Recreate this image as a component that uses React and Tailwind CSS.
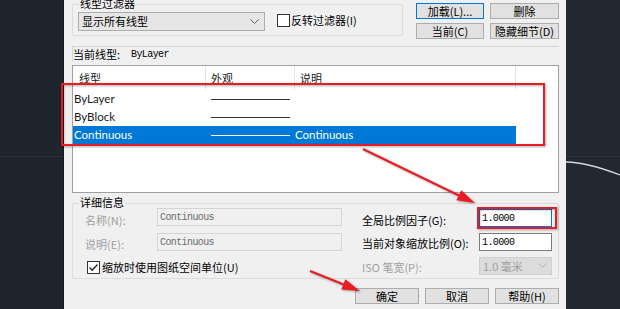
import React from 'react';

const MONO = "font-['Liberation_Mono',monospace] text-[10px] tracking-[-0.6px]";

function Chevron({ color = '#606060' }) {
  return (
    <svg width="9" height="6" viewBox="0 0 9 6">
      <polyline points="0.5,0.5 4.5,4.5 8.5,0.5" fill="none" stroke={color} strokeWidth="1" />
    </svg>
  );
}

function Btn({ children, focused, className = '' }) {
  return (
    <div className={`flex h-[16px] items-center justify-center border ${focused ? 'border-[#0078d7]' : 'border-[#adadad]'} bg-[#e1e1e1] leading-[13px] ${className}`}>
      {children}
    </div>
  );
}

function Row({ name, desc, selected }) {
  return (
    <div className="flex h-[18px] items-center font-['Lato',sans-serif] text-[11.5px]">
      <div className={`flex h-full w-[443px] items-center ${selected ? 'bg-[#0078d7] text-white' : 'text-[#1a1a1a]'}`}>
        <div className="w-[133px] pl-[1px]">{name}</div>
        <div className="w-[89px] pl-[5px]">
          <div className={`h-px w-[79px] ${selected ? 'bg-white' : 'bg-[#333]'}`} />
        </div>
        <div className="w-[221px]">{desc}</div>
      </div>
    </div>
  );
}

function Field({ value, disabled, focused, className = '' }) {
  return (
    <div
      className={`flex h-[18px] items-center border pl-[2px] ${MONO} ${
        disabled ? 'border-[#d4d4d4] bg-[#f0f0f0] text-[#6d6d6d]' : focused ? 'border-[#0078d7] bg-white text-black' : 'border-[#7a7a7a] bg-white text-black'
      } ${className}`}
    >
      {value}
    </div>
  );
}

export default function App() {
  return (
    <div className="relative flex h-[309px] w-[620px] overflow-hidden bg-[#20262e] font-['Noto_Sans_CJK_SC',sans-serif] text-[11px] text-black">
      {/* canvas left */}
      <div className="relative w-[64px] shrink-0 border-r border-[#15191e] bg-[#1f252d]">
        <svg className="absolute inset-0" width="63" height="309">
          <line x1="0" y1="156.5" x2="63" y2="156.5" stroke="#2a3139" strokeWidth="1" />
        </svg>
      </div>

      {/* dialog */}
      <div className="flex w-[502px] shrink-0 flex-col bg-[#f0f0f0] pl-[8px] pr-[7px]">
        <div className="flex h-[46px] items-start">
          <div className="relative mt-[4px] flex h-[32px] w-[331px] items-start rounded-[2px] border border-[#dcdcdc] pl-[5px] pt-[7px]">
            <span className="absolute -top-[8px] left-[6px] bg-[#f0f0f0] px-[1px] leading-[13px]">线型过滤器</span>
            <div className="flex h-[19px] w-[187px] items-center justify-between border border-[#acacac] bg-[#e6e6e6] pl-[3px] pr-[5px] leading-[13px]">
              <span>显示所有线型</span>
              <Chevron />
            </div>
            <div className="ml-[12px] mt-[2px] flex items-center gap-[1px]">
              <span className="h-[13px] w-[13px] border border-[#333] bg-white" />
              <span className="leading-[13px]">反转过滤器(I)</span>
            </div>
          </div>
          <div className="ml-[13px] mt-[3px] grid grid-cols-[68px_69px] gap-x-[6px] gap-y-[4px]">
            <Btn focused>加载(L)...</Btn>
            <Btn>删除</Btn>
            <Btn>当前(C)</Btn>
            <Btn>隐藏细节(D)</Btn>
          </div>
        </div>

        <div className="flex h-[15px] items-center border-l border-t border-[#d6d6d6] leading-[13px]">
          <span>当前线型:</span>
          <span className={`ml-[11px] ${MONO}`}>ByLayer</span>
        </div>

        <div className="mt-[4px] h-[128px] border border-[#a0a0a0] bg-white">
          <div className="flex h-[24px] leading-[13px] text-[#222]">
            <div className="flex w-[133px] items-center border-r border-[#e5e5e5] pl-[6px]">线型</div>
            <div className="flex w-[89px] items-center border-r border-[#e5e5e5] pl-[5px]">外观</div>
            <div className="flex w-[221px] items-center border-r border-[#e5e5e5] pl-[5px]">说明</div>
          </div>
          <Row name="ByLayer" desc="" />
          <Row name="ByBlock" desc="" />
          <Row name="Continuous" desc="Continuous" selected />
        </div>

        <div className="relative mt-[10px] flex h-[76px] rounded-[2px] border border-[#dcdcdc]">
          <span className="absolute -top-[8px] left-[6px] bg-[#f0f0f0] px-[1px] leading-[13px]">详细信息</span>
          <div className="flex w-[269px] flex-col pl-[12px] pt-[4px]">
            <div className="flex h-[18px]">
              <span className="mt-[6px] w-[72px] leading-[13px] text-[#a0a0a0]">名称(N):</span>
              <Field value="Continuous" disabled className="w-[185px]" />
            </div>
            <div className="mt-[7px] flex h-[18px]">
              <span className="mt-[5px] w-[72px] leading-[13px] text-[#a0a0a0]">说明(E):</span>
              <Field value="Continuous" disabled className="w-[185px]" />
            </div>
            <div className="ml-[2px] mt-[10px] flex items-center gap-[2px]">
              <svg width="13" height="13" viewBox="0 0 13 13">
                <rect x="0.5" y="0.5" width="12" height="12" fill="white" stroke="#333" />
                <path d="M2.5 6.5 L5.2 9.2 L10.5 3.5" fill="none" stroke="#222" strokeWidth="1.3" />
              </svg>
              <span className="leading-[13px]">缩放时使用图纸空间单位(U)</span>
            </div>
          </div>
          <div className="ml-[20px] flex flex-col pt-[4px]">
            <div className="mt-[1px] flex h-[18px]">
              <span className="mt-[5px] w-[117px] leading-[13px]">全局比例因子(G):</span>
              <Field value="1.0000" focused className="w-[73px]" />
            </div>
            <div className="mt-[6px] flex h-[18px]">
              <span className="mt-[4px] w-[117px] leading-[13px]">当前对象缩放比例(O):</span>
              <Field value="1.0000" className="w-[73px]" />
            </div>
            <div className="mt-[6px] flex h-[18px]">
              <span className="mt-[4px] w-[117px] leading-[13px] text-[#a0a0a0]">ISO 笔宽(P):</span>
              <div className="flex h-[18px] w-[73px] items-center justify-between border border-[#cfcfcf] bg-[#dcdcdc] pl-[3px] pr-[4px] leading-[13px] text-[#a0a0a0]">
                <span>1.0 毫米</span>
                <Chevron color="#b0b0b0" />
              </div>
            </div>
          </div>
        </div>

        <div className="mt-[9px] flex justify-end gap-[6px]">
          <Btn className="w-[64px]">确定</Btn>
          <Btn className="w-[64px]">取消</Btn>
          <Btn className="w-[64px]">帮助(H)</Btn>
        </div>
      </div>

      {/* canvas right */}
      <div className="relative flex-1 bg-[#222831]">
        <svg className="absolute inset-0" width="54" height="309">
          <line x1="0" y1="156.5" x2="54" y2="156.5" stroke="#2d343d" strokeWidth="1" />
          <path d="M0 162 Q 22 162.5 54 175" fill="none" stroke="#d8d8d8" strokeWidth="1.3" />
        </svg>
      </div>

      {/* annotations */}
      <svg className="pointer-events-none absolute inset-0 drop-shadow-[1px_1px_1px_rgba(0,0,0,0.35)]" width="620" height="309">
        <rect x="62" y="84" width="482" height="61" fill="none" stroke="#e81c23" strokeWidth="2" />
        <rect x="478" y="208" width="78" height="20" fill="none" stroke="#e81c23" strokeWidth="2" />
        <line x1="363" y1="149" x2="460" y2="196" stroke="#e81c23" strokeWidth="2" />
        <polygon points="475,203 456.4,200.2 461.2,190.2" fill="#e81c23" />
        <line x1="310" y1="271" x2="345" y2="285" stroke="#e81c23" strokeWidth="2" />
        <polygon points="360,291 341.3,289.4 345.3,279.2" fill="#e81c23" />
      </svg>
    </div>
  );
}
